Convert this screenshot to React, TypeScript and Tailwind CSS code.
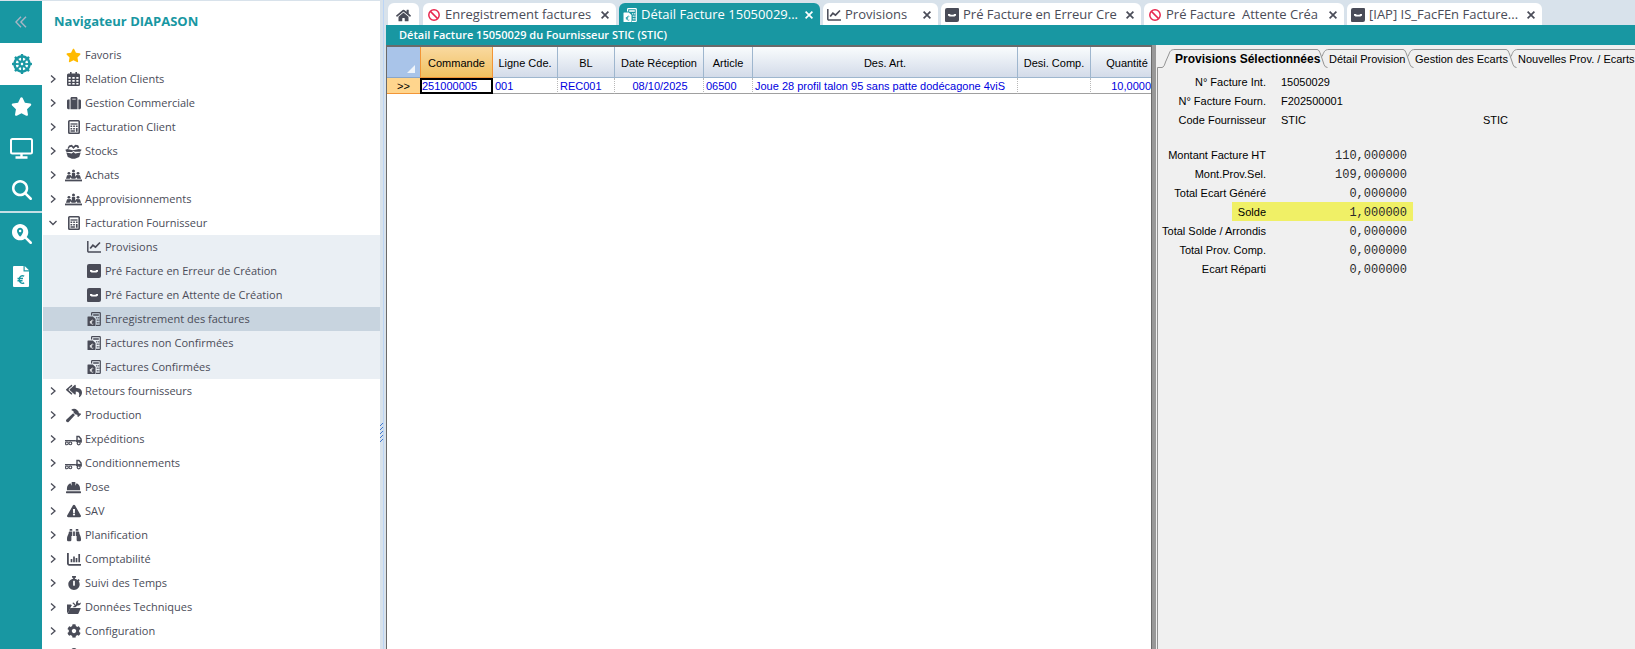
import type { ReactNode } from "react";
import {
  FaDharmachakra,
  FaStar,
  FaReplyAll,
  FaHammer,
  FaHardHat,
  FaExclamationTriangle,
  FaBinoculars,
  FaStopwatch,
  FaCog,
  FaHome,
  FaSuitcase,
  FaUser,
} from "react-icons/fa";
import { FaMagnifyingGlass, FaMagnifyingGlassLocation } from "react-icons/fa6";

const MonitorIcon = () => (
  <svg width="23" height="21" viewBox="0 0 23 21" fill="none" stroke="currentColor" strokeWidth="2">
    <rect x="1" y="1" width="21" height="14.5" rx="1.5" />
    <path d="M11.500 16v3M5.500 19.500h12" strokeWidth="2.400" />
  </svg>
);

const EuroFileIcon = () => (
  <svg width="16" height="21" viewBox="0 0 16 21">
    <path d="M1 0h9.500v5.500H16V20a1 1 0 0 1-1 1H1a1 1 0 0 1-1-1V1a1 1 0 0 1 1-1z" fill="currentColor" />
    <path d="M11.700 0 16 4.300h-4.300z" fill="currentColor" />
    <path d="M11.200 10.200C8.500 8.800 6.300 10.700 6.300 13.500s2.200 4.700 4.900 3.400M4.500 12.500h5.500M4.500 14.700h5" fill="none" stroke="#1897a2" strokeWidth="1.400" />
  </svg>
);

const CalendarIcon = () => (
  <svg width="13" height="14" viewBox="0 0 13 14">
    <path d="M3 0h1.600v1.500h3.800V0H10v1.500h1.500A1.500 1.500 0 0 1 13 3v9.500a1.500 1.500 0 0 1-1.500 1.500h-10A1.500 1.500 0 0 1 0 12.500V3a1.500 1.500 0 0 1 1.500-1.500H3z" fill="currentColor" />
    <path d="M1.500 5h2.200v1.800H1.500zM5.300 5h2.400v1.800H5.300zM9.300 5h2.200v1.800H9.300zM1.500 8h2.200v1.800H1.500zM5.300 8h2.400v1.800H5.300zM9.300 8h2.200v1.800H9.300zM1.500 11h2.200v1.500H1.500zM5.300 11h2.400v1.500H5.300zM9.300 11h2.200v1.500H9.300z" fill="#fff" />
  </svg>
);

const CalculatorIcon = () => (
  <svg width="12" height="14" viewBox="0 0 12 14">
    <rect x=".8" y=".8" width="10.400" height="12.400" rx=".8" fill="none" stroke="currentColor" strokeWidth="1.600" />
    <path d="M2.500 4h7" stroke="currentColor" strokeWidth="1.300" />
    <path d="M2.500 5.600h1.700v1.500H2.500zM5.200 5.600h1.700v1.500H5.200zM7.900 5.600h1.700v1.500H7.900zM2.500 8h1.700v1.400H2.500zM5.200 8h1.700v1.400H5.200zM7.900 8h1.700v3.800H7.900zM2.500 10.300h4.400v1.500H2.500z" fill="currentColor" />
  </svg>
);

const BasketIcon = () => (
  <svg width="17" height="15" viewBox="0 0 17 15" fill="currentColor">
    <path d="M4 1.500 7 .8l1.200 1.700L10.500.8l2.700.4 1 2.300-1.500.8-1-1.500-1.400.2-1.800 2L6.500 2.800l-1.800.4L3.500 5 2.500 4.200z" />
    <path d="M.3 5.700 2.500 5l5.300 1.300L14 5l2.700.7-1.500 2H10L8.500 6.900 7 7.900H1.500z" />
    <path d="M1.300 8.600l5.400.9L8.500 8.100l1.700 1.400 5.500-.9-1.500 4.400-4.300 1.800h-3L2.800 13z" />
  </svg>
);

const MeetingIcon = () => (
  <svg width="18" height="13" viewBox="0 0 18 13" fill="currentColor">
    <circle cx="4.200" cy="4.200" r="1.500" />
    <circle cx="9" cy="1.700" r="1.600" />
    <circle cx="13.800" cy="4.200" r="1.500" />
    <path d="M1 10 2.200 6.300l3.700-.3 1.300 1.700L7.300 3.800h3.400l.1 3.900L12.100 6l3.700.3L17 10h-4l-1-1.600-1 1.600H7L6 8.400 5 10z" />
    <path d="M0 10.800h18v1.900H0z" />
  </svg>
);

const FlatbedIcon = () => (
  <svg width="18" height="15" viewBox="0 -3 18 15" fill="none" stroke="currentColor">
    <path d="M0 5.800h11.500" strokeWidth="1.500" />
    <path d="M12.700 7.500V1.300h2.100l2.200 2.600v4" strokeWidth="1.500" />
    <path d="M11.500 6h6" strokeWidth="2.200" />
    <circle cx="2" cy="8.600" r="1.500" strokeWidth="1.200" />
    <circle cx="5.700" cy="8.600" r="1.500" strokeWidth="1.200" />
    <circle cx="14.500" cy="8.500" r="1.600" strokeWidth="1.300" fill="#fff" />
  </svg>
);

const BarsIcon = () => (
  <svg width="14" height="13" viewBox="0 0 14 13" fill="none" stroke="currentColor">
    <path d="M.9 0v10.500a1.300 1.300 0 0 0 1.300 1.300H14" strokeWidth="1.800" />
    <path d="M4.500 9.300V6M7 9.300V3.500M9.500 9.300V5M12.200 9.300V1" strokeWidth="1.700" />
  </svg>
);

const FolderToolIcon = () => (
  <svg width="14" height="14" viewBox="0 0 14 14" fill="currentColor">
    <path d="M0 4.500h4l1 1.300H4.500L3.300 8 1.500 12 0 13z" />
    <path d="M3.300 8h10.500l-2.200 5.300a1 1 0 0 1-.9.600H.5z" />
    <path d="M5.500 7.300 9 4.200C8.600 2.300 9.800.5 11.600.3L10.700 2.200l1.200 1.200L13.900 2.500c0 2-1.700 3.400-3.500 3L8.500 7.300z" />
    <path d="M5.300 3l1.200-.6 2 2-.9.900z" />
  </svg>
);

const LineChartIcon = () => (
  <svg width="14" height="12" viewBox="0 0 14 12" fill="none" stroke="currentColor">
    <path d="M.8 0v10a1 1 0 0 0 1 1H14" strokeWidth="1.500" />
    <path d="m3.200 7.500 2.700-3.300 2.600 1.900L13 1.500" strokeWidth="1.700" />
  </svg>
);

const TrayIcon = () => (
  <svg width="14" height="14" viewBox="0 0 14 14">
    <path d="M2 0h11a1 1 0 0 1 1 1v11a2 2 0 0 1-2 2H1a1 1 0 0 1-1-1V2a2 2 0 0 1 2-2z" fill="currentColor" />
    <path d="M3 6h2l.7.8h2.700L9.200 6H11v1.400L9.500 8.400h-5L3 7.400z" fill="#fff" />
  </svg>
);

const InvoiceIcon = ({ mark = "#fff" }: { mark?: string }) => (
  <svg width="14" height="14" viewBox="0 0 14 14">
    <path d="M4.600 3.500V1.300A.7.700 0 0 1 5.300.6h7.300a.7.700 0 0 1 .7.700v11.400a.7.700 0 0 1-.7.700H9" fill="none" stroke="currentColor" strokeWidth="1.200" />
    <path d="M6.200 2.200h5.600v1.600H6.200zM9.300 5h1v1.500h-1zM11.300 5h1v1.500h-1zM9.800 7.500h.9V9h-.9zM11.500 7.500h.9V9h-.9zM9.800 10h.9v1.500h-.9zM11.500 10h.9v1.500h-.9z" fill="currentColor" />
    <path d="M1 4.500h4.800L8.500 7v6.500a.5.500 0 0 1-.5.500H1a.5.500 0 0 1-.5-.5V5a.5.500 0 0 1 .5-.5z" fill="currentColor" />
    <path d="M6.300 8.400C4.800 7.700 3.800 8.700 3.800 10.200s1 2.500 2.500 1.800M2.800 9.700h2.500M2.800 10.800h2.200" fill="none" stroke={mark} strokeWidth=".8" />
  </svg>
);

const BanIcon = () => (
  <svg width="12" height="12" viewBox="0 0 12 12" fill="none" stroke="#e8274f" strokeWidth="1.500">
    <circle cx="6" cy="6" r="5.200" />
    <path d="m2.400 2.400 7.200 7.200" />
  </svg>
);

const CloseIcon = () => (
  <svg width="8" height="8" viewBox="0 0 8 8" stroke="currentColor" strokeWidth="1.700">
    <path d="m.6.600 6.800 6.800M7.400.600.600 7.400" />
  </svg>
);

const Chevron = ({ open }: { open?: boolean }) => (
  <svg width="8" height="8" viewBox="0 0 8 8" fill="none" stroke="#4a4c58" strokeWidth="1.300">
    <path d={open ? "M.5 2 4 5.500 7.500 2" : "M2 .5 6 4 2 7.500"} />
  </svg>
);

type Entry = { label: string; icon: ReactNode; leaf?: boolean; children?: Entry[]; selected?: boolean };

const entries: Entry[] = [
  { label: "Favoris", icon: <FaStar size={15} color="#ffba00" />, leaf: true },
  { label: "Relation Clients", icon: <CalendarIcon /> },
  { label: "Gestion Commerciale", icon: <FaSuitcase size={14} /> },
  { label: "Facturation Client", icon: <CalculatorIcon /> },
  { label: "Stocks", icon: <BasketIcon /> },
  { label: "Achats", icon: <MeetingIcon /> },
  { label: "Approvisionnements", icon: <MeetingIcon /> },
  {
    label: "Facturation Fournisseur",
    icon: <CalculatorIcon />,
    children: [
      { label: "Provisions", icon: <LineChartIcon /> },
      { label: "Pré Facture en Erreur de Création", icon: <TrayIcon /> },
      { label: "Pré Facture en Attente de Création", icon: <TrayIcon /> },
      { label: "Enregistrement des factures", icon: <InvoiceIcon />, selected: true },
      { label: "Factures non Confirmées", icon: <InvoiceIcon /> },
      { label: "Factures Confirmées", icon: <InvoiceIcon /> },
    ],
  },
  { label: "Retours fournisseurs", icon: <FaReplyAll size={16} /> },
  { label: "Production", icon: <FaHammer size={15} /> },
  { label: "Expéditions", icon: <FlatbedIcon /> },
  { label: "Conditionnements", icon: <FlatbedIcon /> },
  { label: "Pose", icon: <FaHardHat size={15} /> },
  { label: "SAV", icon: <FaExclamationTriangle size={14} /> },
  { label: "Planification", icon: <FaBinoculars size={14} /> },
  { label: "Comptabilité", icon: <BarsIcon /> },
  { label: "Suivi des Temps", icon: <FaStopwatch size={14} /> },
  { label: "Données Techniques", icon: <FolderToolIcon /> },
  { label: "Configuration", icon: <FaCog size={14} /> },
  { label: "", icon: <FaUser size={14} />, leaf: true },
];

function NavItem({ entry }: { entry: Entry }) {
  return (
    <li>
      <button className="flex h-6 w-full items-center whitespace-nowrap text-left">
        <span className="flex w-[23px] shrink-0 justify-center pr-0.5">{!entry.leaf && <Chevron open={!!entry.children} />}</span>
        <span className="mr-[3px] flex w-[17px] shrink-0 justify-center">{entry.icon}</span>
        {entry.label}
      </button>
      {entry.children && (
        <ul className="ml-px bg-[#eaeff4]">
          {entry.children.map((c) => (
            <li key={c.label}>
              <button
                className={
                  c.selected
                    ? "flex h-6 w-full items-center gap-1 whitespace-nowrap bg-[#c8d4df] pl-11 text-left"
                    : "flex h-6 w-full items-center gap-1 whitespace-nowrap pl-11 text-left"
                }
              >
                {c.icon}
                {c.label}
              </button>
            </li>
          ))}
        </ul>
      )}
    </li>
  );
}

type Tab = { label: string; icon: ReactNode; width: string; active?: boolean };

const tabs: Tab[] = [
  { label: "Enregistrement factures", icon: <BanIcon />, width: "w-[193px]" },
  { label: "Détail Facture 15050029...", icon: <InvoiceIcon mark="#1897a2" />, width: "w-[201px]", active: true },
  { label: "Provisions", icon: <LineChartIcon />, width: "w-[115px]" },
  { label: "Pré Facture en Erreur Cre", icon: <TrayIcon />, width: "w-[200px]" },
  { label: "Pré Facture  Attente Créa", icon: <BanIcon />, width: "w-[200px]" },
  { label: "[IAP] IS_FacFEn Facture...", icon: <TrayIcon />, width: "w-[195px]" },
];

const columns = [
  { label: "Commande", width: "w-[73px]" },
  { label: "Ligne Cde.", width: "w-[65px]" },
  { label: "BL", width: "w-[57px]" },
  { label: "Date Réception", width: "w-[89px]" },
  { label: "Article", width: "w-[49px]" },
  { label: "Des. Art.", width: "w-[265px]" },
  { label: "Desi. Comp.", width: "w-[73px]" },
  { label: "Quantité", width: "" },
];

const cells = ["001", "REC001", "08/10/2025", "06500", "Joue 28 profil talon 95 sans patte dodécagone 4viS", "", "10,0000"];

const header = [
  { label: "N° Facture Int.", value: "15050029" },
  { label: "N° Facture Fourn.", value: "F202500001" },
  { label: "Code Fournisseur", value: "STIC", extra: "STIC" },
];

const amounts = [
  { label: "Montant Facture HT", value: "110,000000" },
  { label: "Mont.Prov.Sel.", value: "109,000000" },
  { label: "Total Ecart Généré", value: "0,000000" },
  { label: "Solde", value: "1,000000", highlight: true },
  { label: "Total Solde / Arrondis", value: "0,000000" },
  { label: "Total Prov. Comp.", value: "0,000000" },
  { label: "Ecart Réparti", value: "0,000000" },
];

const TabJoint = () => (
  <svg width="12" height="19" viewBox="0 0 12 19" fill="none" stroke="#929292" className="shrink-0">
    <path d="M0 .5C2 .5 2.500 3 3.500 5L7 15.500Q8 18.500 10.500 18.500" />
    <path d="M5 7.500C7 3 7.500 .5 12 .5" />
  </svg>
);

export default function App() {
  return (
    <div className="flex h-screen overflow-hidden bg-[#d8e2eb] font-['Open_Sans',sans-serif] text-[11px] text-[#4a4c58]">
      <nav aria-label="Outils" className="mt-px flex w-[42px] shrink-0 flex-col bg-[#1897a2] text-white">
        <button aria-label="Réduire" className="flex h-[42px] items-center justify-center text-[#a9b5c4]">
          <svg width="12" height="12" viewBox="0 0 12 12" fill="none" stroke="currentColor" strokeWidth="1.400">
            <path d="M6 .7.900 6 6 11.300M11 .7 5.900 6 11 11.300" />
          </svg>
        </button>
        <button aria-label="Navigateur" className="flex h-[42px] items-center justify-center bg-white pl-px text-[#1897a2]">
          <FaDharmachakra size={20} />
        </button>
        <button aria-label="Favoris" className="flex h-[42px] items-center justify-center pl-px"><FaStar size={21} /></button>
        <button aria-label="Écran" className="flex h-[42px] items-center justify-center pl-px"><MonitorIcon /></button>
        <button aria-label="Recherche" className="flex h-[42px] items-center justify-center pl-px"><FaMagnifyingGlass size={20} /></button>
        <div className="h-0.5 bg-[#c5dfe5]" />
        <button aria-label="Localiser" className="flex h-[42px] items-center justify-center pl-px"><FaMagnifyingGlassLocation size={20} /></button>
        <button aria-label="Factures" className="flex h-[42px] items-center justify-center"><EuroFileIcon /></button>
      </nav>

      <aside className="mt-px w-[338px] shrink-0 overflow-hidden bg-white">
        <h2 className="flex h-[42px] items-center pl-3 text-[13px] font-bold text-[#1897a2]">Navigateur DIAPASON</h2>
        <ul>
          {entries.map((e) => (
            <NavItem key={e.label} entry={e} />
          ))}
        </ul>
      </aside>

      <div className="flex w-1.5 shrink-0 items-center">
        <div className="flex h-full w-1 items-center border-r border-[#bcd5f5]">
          <svg width="3" height="20" viewBox="0 0 3 20" stroke="#3f77d0" className="mt-54">
            <path d="M0 3 3 0M0 7l3-3M0 11l3-3M0 15l3-3M0 19l3-3" />
          </svg>
        </div>
      </div>

      <main className="flex min-w-0 flex-1 flex-col">
        <div className="flex h-[25px] shrink-0 items-end gap-[3px] pl-0.5">
          <button aria-label="Accueil" className="mr-px flex h-[22px] w-[31px] items-center justify-center rounded-t-md bg-white pt-0.5">
            <FaHome size={15} />
          </button>
          {tabs.map((t) => (
            <div
              key={t.label}
              className={`flex h-[22px] min-w-0 items-center rounded-t-md pl-1 pr-[7px] pt-0.5 ${t.width} ${t.active ? "bg-[#1897a2] text-white" : "bg-white"}`}
            >
              <button className="flex min-w-0 flex-1 items-center gap-1 whitespace-pre text-left text-[13px]">
                <span className="flex w-3.5 shrink-0 justify-center">{t.icon}</span>
                {t.label}
              </button>
              <button aria-label="Fermer"><CloseIcon /></button>
            </div>
          ))}
        </div>
        <h1 className="flex h-5 shrink-0 items-center bg-[#1897a2] pl-[13px] text-[11px] font-semibold text-white">
          Détail Facture 15050029 du Fournisseur STIC (STIC)
        </h1>

        <div className="flex min-h-0 flex-1 font-['Liberation_Sans',sans-serif] text-[11px] text-black">
          <section className="min-w-0 flex-1 overflow-hidden border-x border-t-2 border-[#6a6a6a] bg-white">
            <table className="w-full table-fixed border-separate border-spacing-0 leading-[14px]">
              <thead>
                <tr className="h-[31px]">
                  <th className="w-[33px] border-b border-[#8aa6c8] bg-[#a9c4e9] p-0 align-bottom" aria-label="Sélection">
                    <svg width="8" height="8" viewBox="0 0 8 8" className="mb-1 ml-5">
                      <path d="M8 0v8H0z" fill="#f0f5fb" />
                    </svg>
                  </th>
                  {columns.map((c, i) => (
                    <th
                      key={c.label}
                      className={`px-0 pt-0.5 pb-0 text-center font-normal whitespace-nowrap ${c.width} ${
                        i === 0
                          ? "border-x border-b border-[#f29536] bg-linear-to-b from-[#f9d99f] to-[#f1c15f]"
                          : i === 7
                            ? "border-b border-[#9eb6ce] bg-linear-to-b from-[#f9fcfd] to-[#d3dbe9] pl-3"
                            : "border-r border-b border-[#9eb6ce] bg-linear-to-b from-[#f9fcfd] to-[#d3dbe9]"
                      }`}
                    >
                      {c.label}
                    </th>
                  ))}
                </tr>
              </thead>
              <tbody>
                <tr className="h-4 whitespace-nowrap text-[#0000e0]">
                  <th className="border-b border-[#f29536] bg-[#ffd58d] p-0 font-normal text-black">&gt;&gt;</th>
                  <td className="border-2 border-black p-0 leading-3">251000005</td>
                  {cells.map((c, i) => (
                    <td
                      key={i}
                      className={`border-b border-b-[#a0a0a0] p-0 ${i === 6 ? "text-right" : "border-r border-r-[#b8b8b8] [border-right-style:dotted] pl-0.5"} ${i === 2 ? "text-center" : ""}`}
                    >
                      {c}
                    </td>
                  ))}
                </tr>
              </tbody>
            </table>
          </section>

          <div className="w-[5px] shrink-0 border-r border-[#efefef] bg-[#989898]" />

          <section className="w-[478px] shrink-0 overflow-hidden bg-[#f0f0f0] pt-1">
            <div className="flex h-[19px] whitespace-nowrap">
              <svg width="18" height="19" viewBox="0 0 18 19" fill="none" stroke="#929292" className="shrink-0">
                <path d="M.5 19v-.5H5C7 18 7.500 16 8.500 13L12 5C13 2 14 .5 18 .5" />
              </svg>
              <button className="w-[142px] border-t border-[#929292] text-xs font-bold">Provisions Sélectionnées</button>
              <TabJoint />
              <button className="w-[74px] border-t border-[#929292]">Détail Provision</button>
              <TabJoint />
              <button className="w-[91px] border-t border-[#929292]">Gestion des Ecarts</button>
              <TabJoint />
              <button className="flex-1 border-t border-[#929292] text-left">Nouvelles Prov. / Ecarts</button>
            </div>
            <div className="h-full border-l border-[#929292] pt-1">
              <dl>
                {header.map((r) => (
                  <div key={r.label} className="flex h-[19px] items-center pt-0.5">
                    <dt className="w-[108px] text-right whitespace-nowrap">{r.label}</dt>
                    <dd className="ml-[15px] w-[202px]">{r.value}</dd>
                    {r.extra && <dd>{r.extra}</dd>}
                  </div>
                ))}
              </dl>
              <dl className="mt-4">
                {amounts.map((r) => (
                  <div key={r.label} className="flex h-[19px]">
                    <div className="w-[74px] shrink-0" />
                    <div className={`flex w-[181px] items-center pt-0.5 ${r.highlight ? "bg-[#f0f066]" : ""}`}>
                      <dt className="flex w-[34px] justify-end whitespace-nowrap">{r.label}</dt>
                      <dd className="flex-1 pr-1.5 text-right font-['Liberation_Mono',monospace] text-xs text-[#2b2b2b]">{r.value}</dd>
                    </div>
                  </div>
                ))}
              </dl>
            </div>
          </section>
        </div>
      </main>
    </div>
  );
}
